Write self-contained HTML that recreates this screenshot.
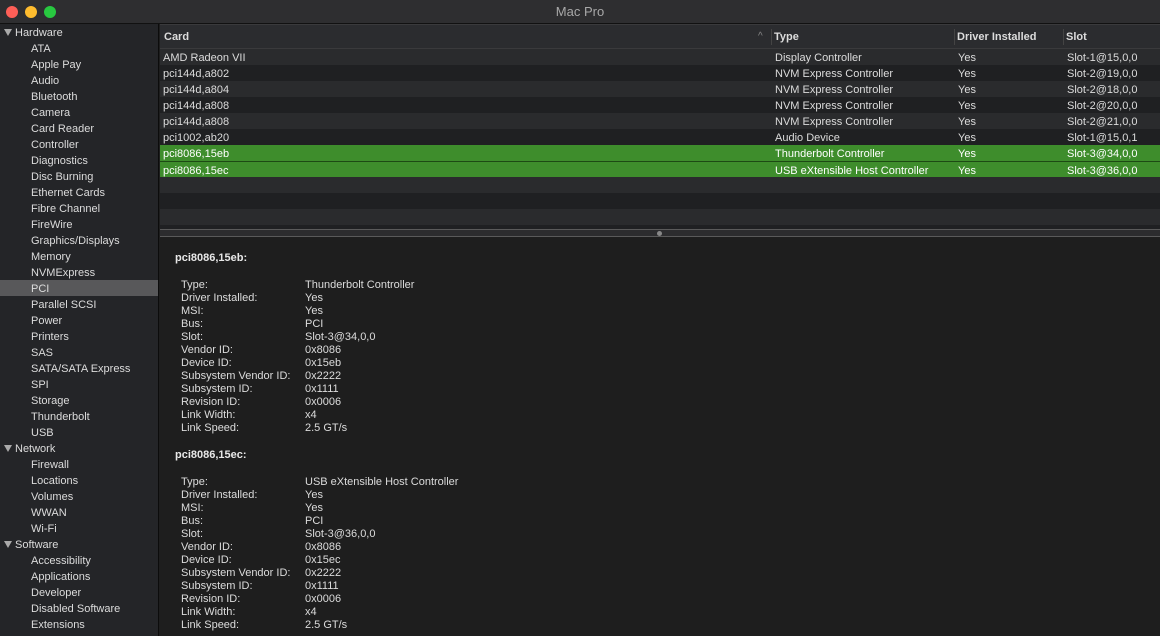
<!DOCTYPE html>
<html><head><style>
*{margin:0;padding:0;box-sizing:border-box}
body{width:1160px;height:636px;overflow:hidden;background:#1e1e1e;font-family:"Liberation Sans",sans-serif;font-size:11px;color:#dcdcdc;position:relative}
.title{position:absolute;left:0;top:0;width:1160px;height:24px;background:#2e2e30;border-bottom:1px solid #111;text-align:center;line-height:24px;font-size:13px;color:#a8a8a8}
.dot{position:absolute;top:6px;width:12px;height:12px;border-radius:50%}
.side{position:absolute;left:0;top:24px;width:159px;height:612px;background:#242528;border-right:1px solid #0c0c0c}
.si{height:16px;line-height:18px;padding-left:31px;white-space:nowrap}
.sh{padding-left:4px}
.sh:before{content:"";display:inline-block;border-left:4px solid transparent;border-right:4px solid transparent;border-top:7px solid #aaa;margin-right:3px;vertical-align:0}
.sel{background:#58585a}
.tbl{position:absolute;left:160px;top:24px;width:1000px;height:205px;background:#1f2022}
.hdr{height:25px;background:#2b2c2f;border-bottom:1px solid #3a3a3c;border-top:1px solid #3a3a3c;position:relative;font-weight:bold;line-height:24px}
.hdr span,.row span{position:absolute}
.row{height:16px;line-height:18px;position:relative}
.row:nth-child(odd){background:#2a2b2d}
.g{background:#3e8d2c!important;color:#fff}
.g2{border-top:1px solid #1d4a14}
.sep{position:absolute;top:4px;width:1px;height:16px;background:#444}
.div{position:absolute;left:160px;top:229px;width:1000px;height:8px;background:#2c2c2e;border-top:1px solid #5a5a5a;border-bottom:1px solid #5a5a5a}
.knob{position:absolute;left:497px;top:1px;width:5px;height:5px;border-radius:50%;background:#888}
.det{position:absolute;left:160px;top:238px;width:1000px;height:398px;background:#1e1e1e}
.det h4{position:absolute;left:15px;font-size:11px;font-weight:bold;color:#e8e8e8}
.kv{position:absolute;left:21px;line-height:13px}
.kv div{height:13px;position:relative}
.kv b{font-weight:normal;position:absolute;left:124px;white-space:nowrap}
</style></head><body>
<div class="title">Mac Pro
<div class="dot" style="left:6px;background:#fe5f57"></div>
<div class="dot" style="left:25px;background:#febc2e"></div>
<div class="dot" style="left:44px;background:#28c840"></div>
</div>
<div class="side">
<div class="si sh">Hardware</div>
<div class="si">ATA</div><div class="si">Apple Pay</div><div class="si">Audio</div><div class="si">Bluetooth</div><div class="si">Camera</div><div class="si">Card Reader</div><div class="si">Controller</div><div class="si">Diagnostics</div><div class="si">Disc Burning</div><div class="si">Ethernet Cards</div><div class="si">Fibre Channel</div><div class="si">FireWire</div><div class="si">Graphics/Displays</div><div class="si">Memory</div><div class="si">NVMExpress</div><div class="si sel">PCI</div><div class="si">Parallel SCSI</div><div class="si">Power</div><div class="si">Printers</div><div class="si">SAS</div><div class="si">SATA/SATA Express</div><div class="si">SPI</div><div class="si">Storage</div><div class="si">Thunderbolt</div><div class="si">USB</div>
<div class="si sh">Network</div>
<div class="si">Firewall</div><div class="si">Locations</div><div class="si">Volumes</div><div class="si">WWAN</div><div class="si">Wi-Fi</div>
<div class="si sh">Software</div>
<div class="si">Accessibility</div><div class="si">Applications</div><div class="si">Developer</div><div class="si">Disabled Software</div><div class="si">Extensions</div>
</div>
<div class="tbl">
<div class="hdr"><span style="left:4px">Card</span><span style="left:598px;font-weight:normal;color:#888;font-size:10px">^</span><div class="sep" style="left:611px"></div><span style="left:614px">Type</span><div class="sep" style="left:794px"></div><span style="left:797px">Driver Installed</span><div class="sep" style="left:903px"></div><span style="left:906px">Slot</span></div>
<div>
<div class="row"><span style="left:3px">AMD Radeon VII</span><span style="left:615px">Display Controller</span><span style="left:798px">Yes</span><span style="left:907px">Slot-1@15,0,0</span></div>
<div class="row"><span style="left:3px">pci144d,a802</span><span style="left:615px">NVM Express Controller</span><span style="left:798px">Yes</span><span style="left:907px">Slot-2@19,0,0</span></div>
<div class="row"><span style="left:3px">pci144d,a804</span><span style="left:615px">NVM Express Controller</span><span style="left:798px">Yes</span><span style="left:907px">Slot-2@18,0,0</span></div>
<div class="row"><span style="left:3px">pci144d,a808</span><span style="left:615px">NVM Express Controller</span><span style="left:798px">Yes</span><span style="left:907px">Slot-2@20,0,0</span></div>
<div class="row"><span style="left:3px">pci144d,a808</span><span style="left:615px">NVM Express Controller</span><span style="left:798px">Yes</span><span style="left:907px">Slot-2@21,0,0</span></div>
<div class="row"><span style="left:3px">pci1002,ab20</span><span style="left:615px">Audio Device</span><span style="left:798px">Yes</span><span style="left:907px">Slot-1@15,0,1</span></div>
<div class="row g"><span style="left:3px">pci8086,15eb</span><span style="left:615px">Thunderbolt Controller</span><span style="left:798px">Yes</span><span style="left:907px">Slot-3@34,0,0</span></div>
<div class="row g g2"><span style="left:3px">pci8086,15ec</span><span style="left:615px">USB eXtensible Host Controller</span><span style="left:798px">Yes</span><span style="left:907px">Slot-3@36,0,0</span></div>
<div class="row"></div><div class="row"></div><div class="row"></div>
</div>
</div>
<div class="div"><div class="knob"></div></div>
<div class="det">
<h4 style="top:14px">pci8086,15eb:</h4>
<div class="kv" style="top:41px">
<div>Type:<b>Thunderbolt Controller</b></div><div>Driver Installed:<b>Yes</b></div><div>MSI:<b>Yes</b></div><div>Bus:<b>PCI</b></div><div>Slot:<b>Slot-3@34,0,0</b></div><div>Vendor ID:<b>0x8086</b></div><div>Device ID:<b>0x15eb</b></div><div>Subsystem Vendor ID:<b>0x2222</b></div><div>Subsystem ID:<b>0x1111</b></div><div>Revision ID:<b>0x0006</b></div><div>Link Width:<b>x4</b></div><div>Link Speed:<b>2.5 GT/s</b></div>
</div>
<h4 style="top:211px">pci8086,15ec:</h4>
<div class="kv" style="top:238px">
<div>Type:<b>USB eXtensible Host Controller</b></div><div>Driver Installed:<b>Yes</b></div><div>MSI:<b>Yes</b></div><div>Bus:<b>PCI</b></div><div>Slot:<b>Slot-3@36,0,0</b></div><div>Vendor ID:<b>0x8086</b></div><div>Device ID:<b>0x15ec</b></div><div>Subsystem Vendor ID:<b>0x2222</b></div><div>Subsystem ID:<b>0x1111</b></div><div>Revision ID:<b>0x0006</b></div><div>Link Width:<b>x4</b></div><div>Link Speed:<b>2.5 GT/s</b></div>
</div>
</div>
</body></html>
